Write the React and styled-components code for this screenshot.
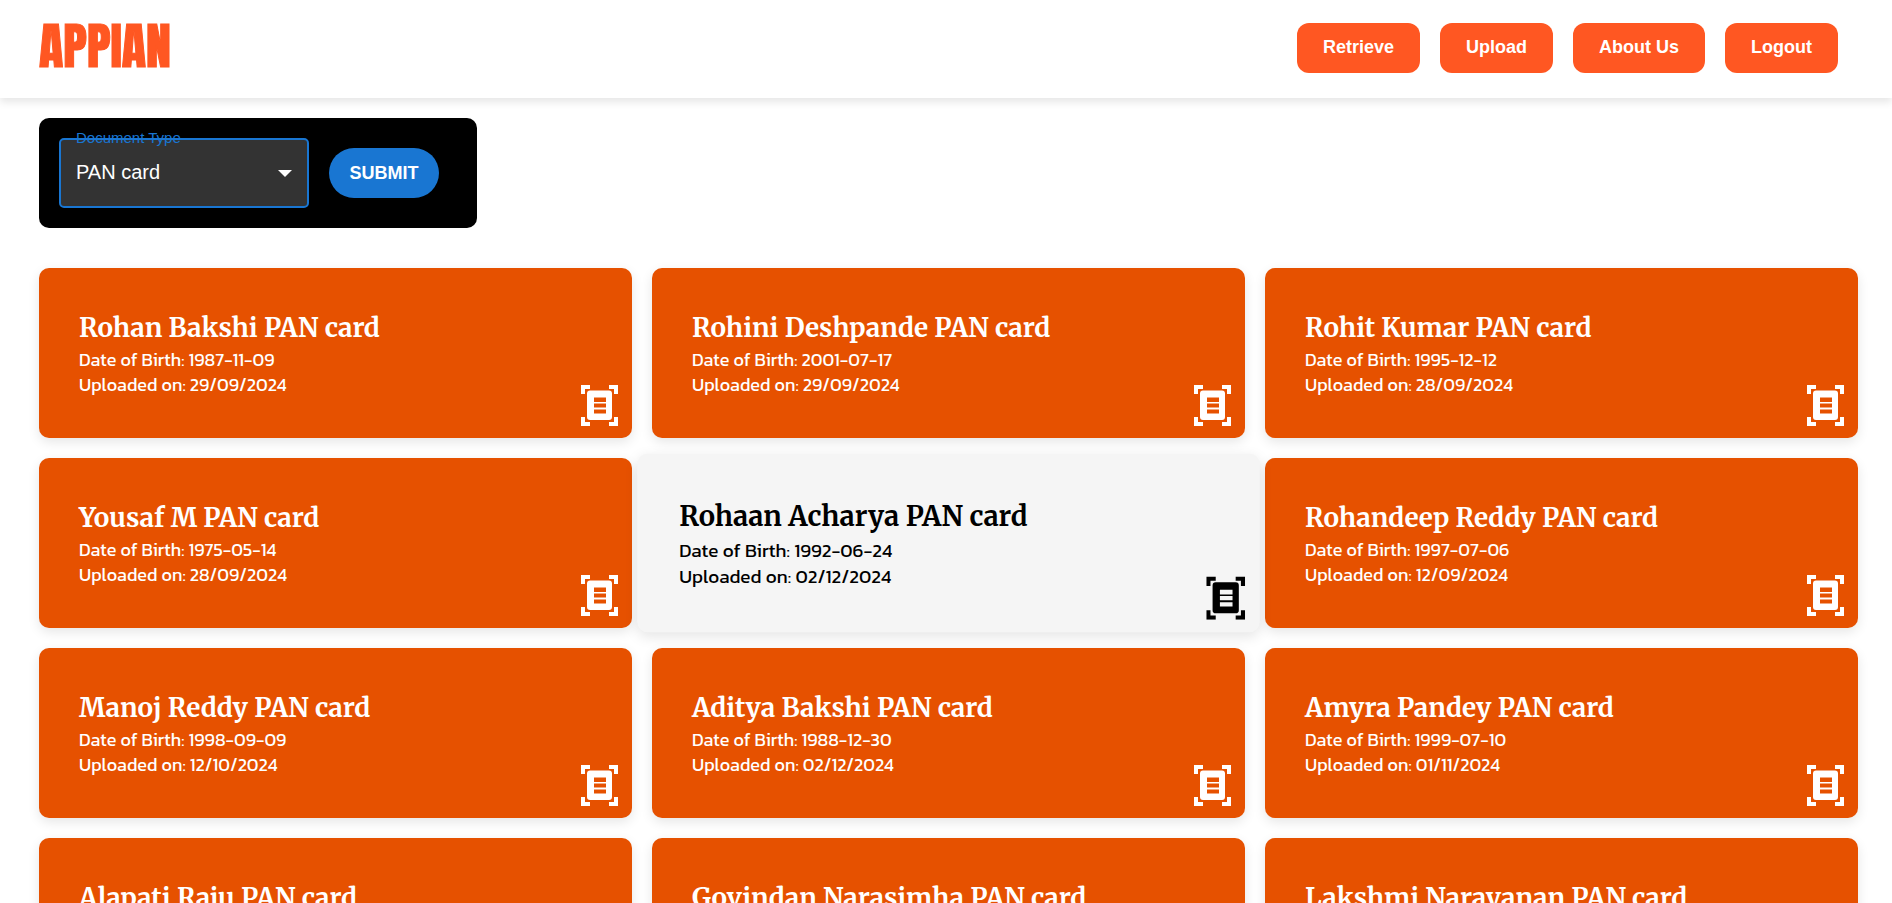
import React, { useState } from 'react';
import styled, { createGlobalStyle } from 'styled-components';

const GlobalStyle = createGlobalStyle`
  *, *::before, *::after {
    box-sizing: border-box;
  }

  body {
    margin: 0;
    background: #ffffff;
    font-family: 'Liberation Sans', Arial, sans-serif;
  }
`;

const Page = styled.div`
  height: 100vh;
  overflow: hidden auto;
  scrollbar-width: none;
`;

const Header = styled.header`
  display: flex;
  justify-content: space-between;
  align-items: flex-start;
  height: 98px;
  padding: 21px 54px 0 39px;
  background: #ffffff;
  box-shadow: 0 4px 8px rgba(0, 0, 0, 0.1);
`;

const Logo = styled.a`
  color: #ff5722;
  font-family: Anton, 'Open Sans Condensed', 'Liberation Sans', sans-serif;
  font-size: 50px;
  font-weight: 400;
  line-height: 50px;
  text-decoration: none;
  -webkit-text-stroke: 1px #ff5722;
`;

const Nav = styled.nav`
  display: flex;
  gap: 20px;
  padding-top: 2px;
`;

const NavButton = styled.button`
  height: 50px;
  padding: 0 26px 2px;
  border: none;
  border-radius: 12px;
  background: #ff5722;
  color: #ffffff;
  font-family: inherit;
  font-size: 18px;
  font-weight: 700;
  cursor: pointer;
`;

const Main = styled.main`
  padding: 20px 34px 20px 39px;
`;

const FilterForm = styled.form`
  display: flex;
  align-items: center;
  gap: 20px;
  width: fit-content;
  padding: 20px 38px 20px 20px;
  border-radius: 10px;
  background: #000000;
`;

const Field = styled.div`
  position: relative;
  width: 250px;
`;

const FieldLabel = styled.label`
  position: absolute;
  top: -9px;
  left: 17px;
  color: #1976d2;
  font-size: 15px;
  line-height: 18px;
  pointer-events: none;
`;

const Select = styled.select`
  display: block;
  width: 100%;
  height: 70px;
  padding: 0 44px 2px 15px;
  appearance: none;
  border: 2px solid #1976d2;
  border-radius: 5px;
  outline: none;
  background: #333333;
  color: #ffffff;
  font-family: inherit;
  font-size: 20px;
`;

const Arrow = styled.svg`
  position: absolute;
  top: 32px;
  right: 17px;
  width: 14px;
  height: 7px;
  fill: #ffffff;
  pointer-events: none;
`;

const SubmitButton = styled.button`
  width: 110px;
  height: 50px;
  padding: 0;
  border: none;
  border-radius: 25px;
  background: #1976d2;
  color: #ffffff;
  font-family: inherit;
  font-size: 18px;
  font-weight: 700;
  text-transform: uppercase;
  cursor: pointer;
`;

const CardGrid = styled.section`
  display: grid;
  grid-template-columns: repeat(3, 1fr);
  gap: 20px;
  margin-top: 40px;
`;

const Card = styled.article`
  position: relative;
  z-index: ${({ $active }) => ($active ? 1 : 0)};
  height: 170px;
  padding: 41px 40px;
  border-radius: 10px;
  background: ${({ $active }) => ($active ? '#f5f5f5' : '#e65100')};
  color: ${({ $active }) => ($active ? '#000000' : '#ffffff')};
  box-shadow: 0 4px 12px rgba(0, 0, 0, 0.1);
  transform: ${({ $active }) => ($active ? 'scale(1.05)' : 'none')};
`;

const CardTitle = styled.h2`
  margin: 0;
  font-family: Merriweather, 'DejaVu Serif Condensed', serif;
  font-size: 26px;
  font-weight: 700;
  line-height: 38px;
`;

const CardText = styled.p`
  margin: 0;
  font-family: Kanit, Roboto, sans-serif;
  font-size: 18px;
  font-weight: 400;
  line-height: 25px;
`;

const CardIcon = styled.svg`
  position: absolute;
  right: 14px;
  bottom: 12px;
  width: 37px;
  height: 41px;
  fill: currentColor;
`;

const cards = [
  { name: 'Rohan Bakshi', born: '1987-11-09', uploaded: '29/09/2024' },
  { name: 'Rohini Deshpande', born: '2001-07-17', uploaded: '29/09/2024' },
  { name: 'Rohit Kumar', born: '1995-12-12', uploaded: '28/09/2024' },
  { name: 'Yousaf M', born: '1975-05-14', uploaded: '28/09/2024' },
  { name: 'Rohaan Acharya', born: '1992-06-24', uploaded: '02/12/2024', active: true },
  { name: 'Rohandeep Reddy', born: '1997-07-06', uploaded: '12/09/2024' },
  { name: 'Manoj Reddy', born: '1998-09-09', uploaded: '12/10/2024' },
  { name: 'Aditya Bakshi', born: '1988-12-30', uploaded: '02/12/2024' },
  { name: 'Amyra Pandey', born: '1999-07-10', uploaded: '01/11/2024' },
  { name: 'Alapati Raju' },
  { name: 'Govindan Narasimha' },
  { name: 'Lakshmi Narayanan' },
];

function ScanIcon() {
  return (
    <CardIcon viewBox="0 0 37 41" aria-hidden="true">
      <path d="M0 0h9v4H4v5H0zM28 0h9v9h-4V4h-5zM0 32h4v5h5v4H0zM33 32h4v9h-9v-4h5z" />
      <path
        fillRule="evenodd"
        d="M9 5.500h19a3 3 0 0 1 3 3v23.500a3 3 0 0 1-3 3H9a3 3 0 0 1-3-3V8.500a3 3 0 0 1 3-3zM13 12.500v4.500h12v-4.500zM13 18.500v4h12v-4zM13 24.500v4h12v-4z"
      />
    </CardIcon>
  );
}

export default function App() {
  const [type, setType] = useState('PAN card');

  return (
    <Page>
      <GlobalStyle />
      <Header>
        <Logo href="#">APPIAN</Logo>
        <Nav>
          <NavButton type="button">Retrieve</NavButton>
          <NavButton type="button">Upload</NavButton>
          <NavButton type="button">About Us</NavButton>
          <NavButton type="button">Logout</NavButton>
        </Nav>
      </Header>
      <Main>
        <FilterForm onSubmit={(event) => event.preventDefault()}>
          <Field>
            <Select id="document-type" value={type} onChange={(event) => setType(event.target.value)}>
              <option>PAN card</option>
            </Select>
            <FieldLabel htmlFor="document-type">Document Type</FieldLabel>
            <Arrow viewBox="0 0 14 7" aria-hidden="true">
              <path d="M0 0h14L7 7z" />
            </Arrow>
          </Field>
          <SubmitButton type="submit">Submit</SubmitButton>
        </FilterForm>
        <CardGrid>
          {cards.map(({ name, born, uploaded, active }) => (
            <Card key={name} $active={active}>
              <CardTitle>{name} PAN card</CardTitle>
              {born && <CardText>Date of Birth: {born}</CardText>}
              {uploaded && <CardText>Uploaded on: {uploaded}</CardText>}
              <ScanIcon />
            </Card>
          ))}
        </CardGrid>
      </Main>
    </Page>
  );
}
